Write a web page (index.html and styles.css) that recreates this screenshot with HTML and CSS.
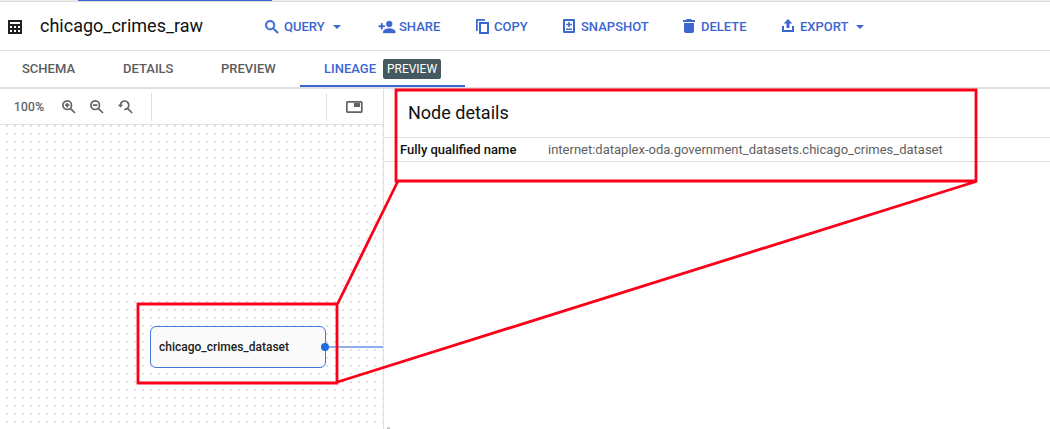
FILE: index.html
```html
<!DOCTYPE html>
<html lang="en">
<head>
<meta charset="utf-8">
<title>chicago_crimes_raw</title>
<link rel="stylesheet" href="styles.css">
</head>
<body>
<div class="strip"><div class="strip-active"></div></div>
<header class="header">
  <svg class="table-icon" width="14" height="14" viewBox="0 0 14 14"><path fill="#212121" fill-rule="evenodd" d="M0 0h14v14H0zM2 2v2h10V2zM2 6v2h2V6zM6 6v2h2V6zM10 6v2h2V6zM2 10v2h2v-2zM6 10v2h2v-2zM10 10v2h2v-2z"/></svg>
  <h1 class="title">chicago_crimes_raw</h1>
  <nav class="actions">
    <button class="action query"><svg width="18" height="18" viewBox="0 0 24 24"><path d="M15.5 14h-.8l-.3-.3A6.5 6.5 0 1 0 13.7 14.4l.3.3v.8l5 5 1.500-1.500zM9.500 14a4.500 4.500 0 1 1 0-9 4.500 4.500 0 0 1 0 9z" stroke="currentColor" stroke-width=".7"/></svg><span>QUERY</span><i class="caret"></i></button>
    <button class="action share"><svg width="18" height="18" viewBox="0 0 24 24"><path d="M15 12a4 4 0 1 0 0-8 4 4 0 0 0 0 8zM6 10V7H4v3H1v2h3v3h2v-3h3v-2zm9 4c-2.700 0-8 1.300-8 4v2h16v-2c0-2.700-5.300-4-8-4z" stroke="currentColor" stroke-width=".5"/></svg><span>SHARE</span></button>
    <button class="action copy"><svg width="14" height="16" viewBox="0 0 14 16"><path d="M0 12V1q0-1 1-1h8v1.700H1.700V12zM3 3h10v12H3zM5 5v8h6V5z" fill-rule="evenodd"/></svg><span>COPY</span></button>
    <button class="action snapshot"><svg width="14" height="16" viewBox="0 0 14 16"><path fill-rule="evenodd" d="M0 1q0-1 1-1h10q1 0 1 1v12q0 1-1 1H1q-1 0-1-1zM2 2v10h8V2zM5.200 3h1.600v1.700h2v1.600h-2V8H5.200V6.300h-2V4.700h2zM3 9.500h6V11H3z"/></svg><span>SNAPSHOT</span></button>
    <button class="action delete"><svg width="14" height="16" viewBox="0 0 14 16"><path d="M0 1h3l1-1h4l1 1h3v2H0zM1 4h10v8q0 2-2 2H3q-2 0-2-2z"/></svg><span>DELETE</span></button>
    <button class="action export"><svg width="14" height="16" viewBox="0 0 14 16"><path d="M6 0l4.300 4.500H7.500V9h-3V4.500H1.700zM0 7h2v4h8V7h2v6H0z"/></svg><span>EXPORT</span><i class="caret"></i></button>
  </nav>
</header>
<nav class="tabs">
  <a class="tab schema">SCHEMA</a>
  <a class="tab details-tab">DETAILS</a>
  <a class="tab preview">PREVIEW</a>
  <a class="tab lineage">LINEAGE<span class="badge">PREVIEW</span></a>
</nav>
<main class="content">
  <section class="graph">
    <div class="tools">
      <span class="zoom">100%</span>
      <div class="zoom-icons">
        <svg width="14" height="14" viewBox="0 0 14 14"><circle cx="5.200" cy="5.200" r="4.300"/><path d="M8.300 8.300l4.700 4.700M3 5.200h4.400M5.200 3v4.400"/></svg>
        <svg width="14" height="14" viewBox="0 0 14 14"><circle cx="5.200" cy="5.200" r="4.300"/><path d="M8.300 8.300l4.700 4.700M3 5.200h4.400"/></svg>
        <svg width="15" height="14" viewBox="0 0 15 14"><path d="M2.400 5A4.200 4.200 0 1 1 6.300 9.400M9.500 8.300l4.700 4.700"/><path class="solid" d="M-.2 4.700h5.400L2.500 7.500z"/></svg>
      </div>
      <div class="panel-toggle"><svg width="17" height="12" viewBox="0 0 17 12"><rect x=".8" y=".8" width="15" height="10.400" rx=".8"/><path class="solid" d="M8 2h6v4H8z"/></svg></div>
    </div>
    <div class="canvas">
      <div class="edge"></div>
      <div class="node"><span>chicago_crimes_dataset</span></div>
      <div class="port"></div>
    </div>
  </section>
  <aside class="details">
    <h2 class="details-title"><span>Node details</span></h2>
    <div class="row"><span class="key">Fully qualified name</span><span class="value">internet:dataplex-oda.government_datasets.chicago_crimes_dataset</span></div>
    <div class="handle"></div>
  </aside>
</main>
<svg class="callout" width="1050" height="429" viewBox="0 0 1050 429"><path d="M396 90H976V181H396zM138 304H337V383H138zM337.500 304L398 181M337.500 382L976 181.500"/></svg>
</body>
</html>
```
FILE: styles.css
```css
* { box-sizing: border-box; }
body { margin: 0; width: 1050px; height: 429px; overflow: hidden; background: #fff; font-family: Roboto, "Liberation Sans", sans-serif; display: flex; flex-direction: column; }
.strip { height: 2px; flex: none; background: #eee; border-bottom: 1px solid #dcdcdc; }
.strip-active { width: 194px; height: 1px; margin-left: 78px; background: #3c66d0; }
.header { height: 49px; flex: none; display: flex; align-items: center; border-bottom: 1px solid #dfdfdf; padding-left: 8px; }
.table-icon { flex: none; margin-top: 2px; }
.title { width: 243px; flex: none; margin: 0; padding-left: 18px; font-size: 18px; line-height: 24px; font-weight: 400; color: #111; }
.actions { display: flex; }
.action { display: flex; align-items: center; height: 24px; padding: 0; border: 0; background: none; color: #3c66d0; font: 500 13px/24px Roboto, sans-serif; flex: none; margin-top: 2px; }
.action svg { fill: currentColor; flex: none; }
.query { width: 114px; }
.query svg { margin-left: -2px; }
.query span { margin-left: 3px; }
.share { width: 97px; }
.share svg { margin-left: -1px; }
.share span { margin-left: 3px; }
.copy { width: 87px; }
.copy span, .snapshot span, .delete span, .export span { margin-left: 4px; }
.snapshot { width: 120px; }
.delete { width: 99px; }
.caret { border: 4px solid transparent; border-top-color: currentColor; border-bottom: 0; margin-left: 8px; }
.tabs { height: 38px; flex: none; display: flex; border-bottom: 2px solid #e0e0e0; font: 500 13px/35px Roboto, sans-serif; color: #5c5c5c; }
.schema { width: 101px; padding-left: 22px; }
.details-tab { width: 98px; padding-left: 22px; }
.preview { width: 101px; padding-left: 22px; }
.lineage { width: 165px; padding-left: 24px; display: flex; align-items: center; color: #3c66d0; border-bottom: 2px solid #3c66d0; }
.badge { width: 58px; height: 20px; margin: 2px 0 0 7px; border-radius: 2px; background: #455a60; color: #fff; font-size: 12px; line-height: 20px; font-weight: 400; text-align: center; }
.content { flex: 1; display: flex; min-height: 0; }
.graph { width: 384px; flex: none; display: flex; flex-direction: column; border-right: 1px solid #dfdfdf; }
.tools { height: 36px; flex: none; display: flex; align-items: center; border-bottom: 1px solid #dfdfdf; padding-left: 14px; }
.tools svg { fill: none; stroke: #5f6368; stroke-width: 1.7; overflow: visible; }
.tools svg .solid { fill: #5f6368; stroke: none; }
.zoom { width: 48px; font-size: 12px; letter-spacing: .3px; color: #55595e; -webkit-text-stroke: .2px #55595e; }
.zoom-icons { width: 90px; height: 28px; display: flex; align-items: center; gap: 14px; border-right: 1px solid #dfdfdf; }
.panel-toggle { height: 28px; margin-left: 174px; padding-left: 19px; border-left: 1px solid #dfdfdf; display: flex; align-items: center; }
.canvas { flex: 1; position: relative; overflow: hidden; background-image: linear-gradient(to right, #fff 6px, transparent 6px), linear-gradient(to bottom, #e1e1e1 2px, #fff 2px); background-size: 8px 8px; }
.node { position: absolute; left: 150px; top: 201px; width: 176px; height: 42px; border: 1px solid #4377dc; border-radius: 6px; background: #fafafa; font: 500 12px/40px Roboto, sans-serif; padding-left: 8px; color: #212121; }
.edge { position: absolute; left: 325px; top: 221px; width: 58px; height: 2px; background: #8db0ed; }
.port { position: absolute; left: 321px; top: 218px; width: 8px; height: 8px; border-radius: 50%; background: #1f6de0; }
.details { flex: 1; display: flex; flex-direction: column; }
.details-title { height: 49px; flex: none; margin: 0; padding-left: 24px; font-size: 18px; line-height: 48px; font-weight: 400; color: #111; border-bottom: 1px solid #dfdfdf; }
.row { height: 24px; flex: none; display: flex; padding-left: 16px; line-height: 24px; font-size: 13px; border-bottom: 1px solid #dfdfdf; }
.key { width: 148px; font-weight: 500; color: #111; }
.value { color: #616161; }
.handle { width: 3px; height: 2px; margin: auto 0 0 3px; background: #bbb; border-radius: 2px 2px 0 0; }
.callout { position: absolute; left: 0; top: 0; fill: none; stroke: #fc0019; stroke-width: 2.8; pointer-events: none; }
```
